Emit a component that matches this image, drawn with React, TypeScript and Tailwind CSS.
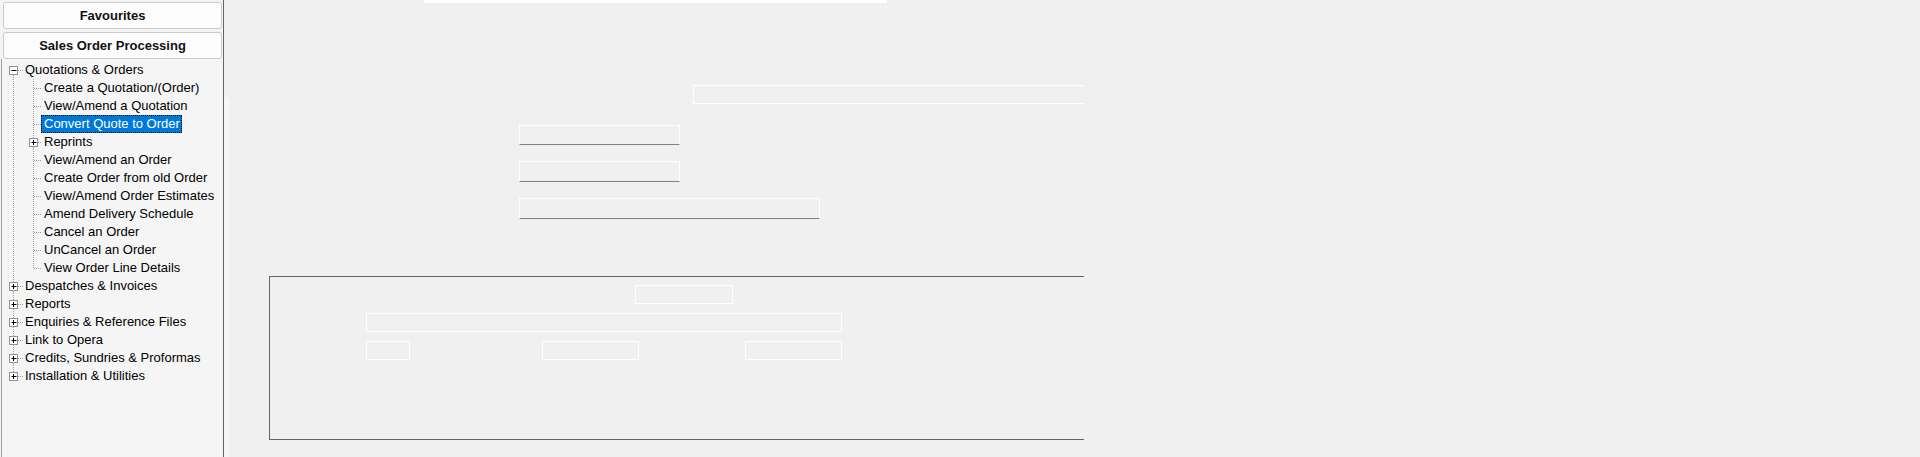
import React from "react";

type Row = {
  label: string;
  level: 0 | 1;
  box?: "plus" | "minus";
  first?: boolean;
  last?: boolean;
  selected?: boolean;
};

const rows: Row[] = [
  { label: "Quotations & Orders", level: 0, box: "minus", first: true },
  { label: "Create a Quotation/(Order)", level: 1 },
  { label: "View/Amend a Quotation", level: 1 },
  { label: "Convert Quote to Order", level: 1, selected: true },
  { label: "Reprints", level: 1, box: "plus" },
  { label: "View/Amend an Order", level: 1 },
  { label: "Create Order from old Order", level: 1 },
  { label: "View/Amend Order Estimates", level: 1 },
  { label: "Amend Delivery Schedule", level: 1 },
  { label: "Cancel an Order", level: 1 },
  { label: "UnCancel an Order", level: 1 },
  { label: "View Order Line Details", level: 1, last: true },
  { label: "Despatches & Invoices", level: 0, box: "plus" },
  { label: "Reports", level: 0, box: "plus" },
  { label: "Enquiries & Reference Files", level: 0, box: "plus" },
  { label: "Link to Opera", level: 0, box: "plus" },
  { label: "Credits, Sundries & Proformas", level: 0, box: "plus" },
  { label: "Installation & Utilities", level: 0, box: "plus", last: true },
];

const LINE = "#a0a0a0";

function ExpandBox({ cx, kind }: { cx: number; kind: "plus" | "minus" }) {
  return (
    <g>
      <rect x={cx - 3.5} y={5.5} width={8} height={8} fill="#ffffff" stroke="#919191" strokeWidth={1} />
      <line x1={cx - 1.5} y1={9.5} x2={cx + 3.5} y2={9.5} stroke="#000000" strokeWidth={1} />
      {kind === "plus" && <line x1={cx + 0.5} y1={7} x2={cx + 0.5} y2={12} stroke="#000000" strokeWidth={1} />}
    </g>
  );
}

function Connector({ row }: { row: Row }) {
  const w = row.level === 0 ? 23 : 42;
  const rootX = 13.5;
  const childX = 33.5;
  const dash = "1 1";
  return (
    <svg width={w - 2} height={18} viewBox={`2 0 ${w - 2} 18`} className="shrink-0 block">
      {row.level === 0 ? (
        <>
          {!row.first && <line x1={rootX} y1={0} x2={rootX} y2={5} stroke={LINE} strokeDasharray={dash} />}
          {!row.last && <line x1={rootX} y1={14} x2={rootX} y2={18} stroke={LINE} strokeDasharray={dash} />}
          <line x1={18} y1={9.5} x2={23} y2={9.5} stroke={LINE} strokeDasharray={dash} />
          {row.box && <ExpandBox cx={13} kind={row.box} />}
        </>
      ) : (
        <>
          <line x1={rootX} y1={0} x2={rootX} y2={18} stroke={LINE} strokeDasharray={dash} />
          {row.box ? (
            <>
              <line x1={childX} y1={0} x2={childX} y2={5} stroke={LINE} strokeDasharray={dash} />
              {!row.last && <line x1={childX} y1={14} x2={childX} y2={18} stroke={LINE} strokeDasharray={dash} />}
              <line x1={38} y1={9.5} x2={42} y2={9.5} stroke={LINE} strokeDasharray={dash} />
              <ExpandBox cx={33} kind={row.box} />
            </>
          ) : (
            <>
              <line x1={childX} y1={0} x2={childX} y2={row.last ? 10 : 18} stroke={LINE} strokeDasharray={dash} />
              <line x1={34} y1={9.5} x2={42} y2={9.5} stroke={LINE} strokeDasharray={dash} />
            </>
          )}
        </>
      )}
    </svg>
  );
}

function TreeRow({ row }: { row: Row }) {
  return (
    <div className="flex h-[18px] items-center">
      <Connector row={row} />
      <span
        className={
          row.selected
            ? "h-[18px] pl-[2px] pr-[1px] leading-[16px] whitespace-nowrap bg-[#0078d7] text-white border border-dotted border-[#0a0a0a] -ml-[1px]"
            : "h-[18px] pl-[2px] pr-[1px] leading-[18px] whitespace-nowrap text-black"
        }
      >
        {row.label}
      </span>
    </div>
  );
}

export default function App() {
  return (
    <div
      className="flex w-[1920px] h-[457px] overflow-hidden bg-[#f0f0f0] text-[13px]"
      style={{ fontFamily: '"Liberation Sans", Arial, sans-serif' }}
    >
      {/* Sidebar */}
      <div className="flex flex-col w-[224px] shrink-0 bg-[#f4f4f4] border-r border-[#646464]">
        <div className="flex flex-col gap-[3px] pt-[2px] pl-[3px] pr-[1px]">
          <div className="h-[27px] flex items-center justify-center rounded-[3px] border border-[#cacaca] bg-[#fdfdfd] font-bold text-[13px] text-[#111]">
            Favourites
          </div>
          <div className="h-[27px] flex items-center justify-center rounded-[3px] border border-[#cacaca] bg-[#fdfdfd] font-bold text-[13px] text-[#111]">
            Sales Order Processing
          </div>
        </div>
        <div className="flex-1 ml-[1px] border-l border-[#a0a0a0] bg-[#f5f5f5] pt-[2px]">
          {rows.map((r) => (
            <TreeRow key={r.label} row={r} />
          ))}
        </div>
      </div>

      {/* Splitter strip */}
      <div className="w-[5px] shrink-0 flex flex-col pt-[97px]">
        <div className="flex-1 bg-[#f6f6f6]" />
      </div>

      {/* Main content */}
      <div className="w-[855px] shrink-0 flex flex-col overflow-hidden">
        <div className="ml-[195px] w-[463px] h-[3px] bg-white shrink-0" />

        <div className="mt-[82px] ml-[464px] w-[400px] h-[19px] border-t border-l border-b border-white shrink-0" />

        <div className="mt-[21px] ml-[290px] w-[161px] h-[20px] border-t border-l border-r border-white border-b border-b-[#808080] shrink-0" />
        <div className="mt-[16px] ml-[290px] w-[161px] h-[21px] border-t border-l border-r border-white border-b border-b-[#808080] shrink-0" />
        <div className="mt-[16px] ml-[290px] w-[301px] h-[21px] border-t border-l border-r border-white border-b border-b-[#808080] shrink-0" />

        {/* Group box */}
        <div className="mt-[57px] ml-[40px] w-[815px] h-[164px] shrink-0 border-t border-l border-b border-[#646464] flex flex-col">
          <div className="mt-[8px] ml-[365px] w-[98px] h-[19px] border border-white shrink-0" />
          <div className="mt-[9px] ml-[96px] w-[476px] h-[19px] border border-white shrink-0" />
          <div className="mt-[9px] ml-[96px] flex shrink-0">
            <div className="w-[44px] h-[19px] border border-white" />
            <div className="ml-[132px] w-[97px] h-[19px] border border-white" />
            <div className="ml-[106px] w-[97px] h-[19px] border border-white" />
          </div>
        </div>
      </div>

      <div className="flex-1" />
    </div>
  );
}
